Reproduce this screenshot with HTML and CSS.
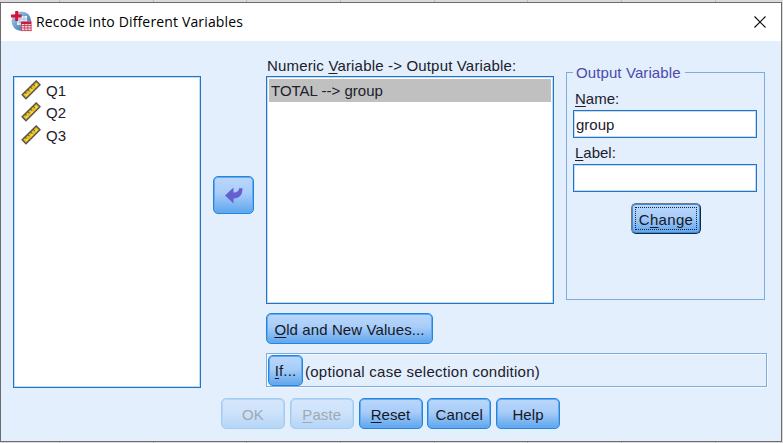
FILE: index.html
```html
<!DOCTYPE html>
<html lang="en">
<head>
<meta charset="utf-8">
<title>Recode into Different Variables</title>
<link rel="stylesheet" href="styles.css">
</head>
<body>
<svg class="defs" width="0" height="0" aria-hidden="true">
  <symbol id="ruler" viewBox="0 0 20 20">
    <path d="M1.200 14.800 15.200 1 19 4.700 5 18.700z" fill="#e6bd2b" stroke="#55564e" stroke-width="1.500"/>
    <path d="M4 12l1.800 1.800M6.600 9.400l1.800 1.800M9.300 6.800l1.800 1.800M12 4.100l1.800 1.800" stroke="#6b6024" stroke-width="1.100"/>
    <path d="M5 15.400l1.500-1.500M10 10.800l1.400-1.400M14.600 6l1.300-1.300" stroke="#ffe030" stroke-width="1.800"/>
  </symbol>
</svg>
<div class="window">
  <header class="titlebar">
    <svg class="app-icon" width="21" height="21" viewBox="0 0 21 21">
      <defs><linearGradient id="globe" x1="0" y1="0" x2="1" y2="1"><stop offset="0" stop-color="#b9d7ea"/><stop offset=".5" stop-color="#6a9ecb"/><stop offset="1" stop-color="#2d67a6"/></linearGradient></defs>
      <circle cx="10.400" cy="10.300" r="9.800" fill="url(#globe)"/>
      <path d="M6 5h10v9H6z" fill="#e7f2fa"/>
      <path d="M6 8h10M6 11h10M9 5v9M13 5v9" stroke="#a3bddb" stroke-width="1"/>
      <path d="M4.200 0h3v3.600h3.500v2.800H7.200V10h-3V6.400H0V3.600h4.200z" fill="#d51238"/>
      <path d="M10 10.500h10.500V20H10z" fill="#f4dbe3"/>
      <path d="M10 10.500h10.500v2.500H10z" fill="#c91d3e"/>
      <path d="M10.500 13v7M13.700 13v7M16.900 13v7M20 13v7M10 14.500h10.500M10 17h10.500M10 19.600h10.500" stroke="#cf4968" stroke-width="1"/>
    </svg>
    <h1 class="title">Recode into Different Variables</h1>
    <svg class="close" width="12" height="12" viewBox="0 0 12 12"><path d="M.5.500l11 11M11.500.500l-11 11" stroke="#111" stroke-width="1.150"/></svg>
  </header>
  <main class="content">
    <ul class="list source">
      <li><svg width="20" height="20"><use href="#ruler"/></svg><span>Q1</span></li>
      <li><svg width="20" height="20"><use href="#ruler"/></svg><span>Q2</span></li>
      <li><svg width="20" height="20"><use href="#ruler"/></svg><span>Q3</span></li>
    </ul>
    <button class="btn move" aria-label="Move"><svg width="20" height="17" viewBox="0 0 20 17"><path d="M1 8.500 9.500.500V5.500C13.500 5.500 15 4 15 1.300H18.500C18.500 8 15.500 11.500 9.500 11.500V16.500z" fill="#665fd0"/></svg></button>
    <div class="main">
      <div class="top">
        <section class="mapping">
          <div class="caption">Numeric <u>V</u>ariable -&gt; Output Variable:</div>
          <div class="list target"><div class="selected">TOTAL --&gt; group</div></div>
        </section>
        <fieldset class="output">
          <legend>Output Variable</legend>
          <label class="name"><span><u>N</u>ame:</span></label>
          <div class="field">group</div>
          <label class="lab"><span><u>L</u>abel:</span></label>
          <div class="field"></div>
          <button class="btn change"><span>C<u>h</u>ange</span></button>
        </fieldset>
      </div>
      <button class="btn values"><span><u>O</u>ld and New Values...</span></button>
      <div class="condition"><button class="btn if"><span><u>I</u>f...</span></button><span class="hint">(optional case selection condition)</span></div>
    </div>
  </main>
  <footer class="actions">
    <button class="btn" disabled><span>OK</span></button>
    <button class="btn" disabled><span><u>P</u>aste</span></button>
    <button class="btn"><span><u>R</u>eset</span></button>
    <button class="btn"><span>Cancel</span></button>
    <button class="btn"><span>Help</span></button>
  </footer>
</div>
</body>
</html>
```
FILE: styles.css
```css
* { box-sizing: border-box; }
body {
  margin: 0;
  width: 783px;
  height: 443px;
  padding-top: 2px;
  overflow: hidden;
  font: 15px/18px "Liberation Sans", Arial, sans-serif;
  color: #20202c;
  background:
    repeating-linear-gradient(90deg, transparent 0 59px, #a9bed2 59px 60px, transparent 60px 93.700px),
    #dadada;
}
.defs { position: absolute; }
u { text-decoration-thickness: 1px; text-underline-offset: 2px; text-decoration-skip-ink: none; }
.window {
  width: 782px;
  height: 440px;
  border: 1px solid #6c6c6e;
  background: #e3effc;
}
.titlebar {
  height: 38px;
  padding: 0 15px 0 10px;
  display: flex;
  align-items: center;
  background: #fff;
}
.app-icon { margin-top: -1px; }
.title {
  margin: 0 auto 0 4px;
  font: 400 14px/20px "Open Sans", "Noto Sans", sans-serif;
  letter-spacing: .15px;
  color: #000;
}
.content {
  display: flex;
  height: 347px;
  padding: 0 0 0 12px;
}
.list {
  margin: 0;
  padding: 2px;
  list-style: none;
  background: #fff;
  border: 1px solid #2474c4;
  box-shadow: inset 0 0 0 1px #c3dbf2;
}
.source { width: 188px; height: 312px; margin-top: 35px; padding: 2px 7px; }
.source li { height: 22.500px; display: flex; align-items: center; gap: 5px; }
.source svg { margin-top: -1px; }
.source span { padding-top: 1px; }
.btn {
  flex: none;
  display: flex;
  align-items: center;
  justify-content: center;
  height: 31px;
  padding: 2px 0 0;
  border: 1px solid #2286df;
  border-radius: 5px;
  box-shadow: inset 0 0 0 1px #65aaf0;
  background: linear-gradient(#bad7fb, #a8cdf9 45%, #5ea5ed);
  font: inherit;
  letter-spacing: .1px;
  color: #171725;
}
.btn:disabled {
  border-color: #a3ccf3;
  box-shadow: inset 0 0 0 1px #b6d6f7;
  background: linear-gradient(#d5e6fc, #cee3fb 45%, #b5d5f7);
  color: #a2a8b0;
}
.move { width: 41px; height: 38px; padding: 0; margin: 135px 0 0 12px; }
.main { width: 501px; margin-left: 12px; }
.top { display: flex; gap: 12px; height: 263px; }
.mapping { width: 288px; }
.caption { height: 35px; padding: 16px 0 0 1px; white-space: nowrap; letter-spacing: .17px; }
.target { height: 228px; }
.selected { height: 23px; padding: 3px 2px; background: #c0c0c0; }
.output {
  width: 199px;
  min-width: 0;
  height: 238px;
  margin: 21px 0 0;
  padding: 0 7px 0 6px;
  border: 1px solid #7dacdf;
}
.output legend { padding: 2px 4px 0 3px; margin-top: 1px; letter-spacing: .1px; color: #4a4aae; }
.output label { display: block; white-space: nowrap; }
.name { height: 28px; padding: 8px 0 0 2px; }
.lab { height: 26px; padding: 6px 0 0 2px; }
.field {
  height: 28px;
  padding: 5px 2px;
  background: #fff;
  border: 1px solid #2474c4;
  box-shadow: inset 0 0 0 1px #c3dbf2;
}
.change {
  width: 70px;
  height: 31px;
  margin: 11px 0 0 58px;
  padding: 1px;
  border-color: #777 #102840 #102840 #777;
  box-shadow: inset 0 0 0 1px #388ddc;
  letter-spacing: .3px;
}
.change span { border: 1px dotted #223; width: 62px; height: 23px; line-height: 23px; }
.values { width: 167px; height: 31px; margin-top: 9px; }
.condition {
  display: flex;
  align-items: center;
  width: 501px;
  height: 34px;
  margin-top: 9px;
  padding-left: 1px;
  border: 1px solid #7dacdf;
  box-shadow: inset 1px 1px #f6faff, 1px 1px #f6faff;
}
.if { width: 35px; height: 31px; }
.hint { margin-left: 2px; white-space: nowrap; padding-top: 3px; letter-spacing: .26px; }
.actions { display: flex; gap: 4.750px; padding: 10px 0 0 220px; }
.actions .btn { width: 64px; }
```
